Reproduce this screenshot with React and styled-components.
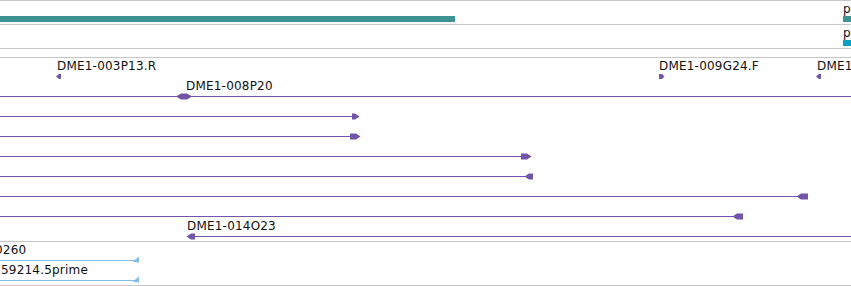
import React from "react";
import styled, { createGlobalStyle } from "styled-components";

const Global = createGlobalStyle`
  html, body { margin: 0; padding: 0; background: #fff; overflow: hidden; }
  body { font-family: "DejaVu Sans", "Liberation Sans", sans-serif; }
`;

const GRID = "#c6c6c6";
const PURPLE = "#7254a9";
const TEAL = "#409292";
const CYAN = "#0aa2c2";
const SKY = "#82bde6";

const Browser = styled.div`
  width: 851px;
  height: 286px;
  display: flex;
  flex-direction: column;
  border-top: 1px solid ${GRID};
  box-sizing: border-box;
  overflow: hidden;
`;

const Track = styled.div`
  position: relative;
  flex: none;
  box-sizing: border-box;
  height: ${(p) => p.$h}px;
  border-bottom: 1px solid ${GRID};
  overflow: hidden;
  display: flex;
  flex-direction: column;
`;

const Row = styled.div`
  position: relative;
  flex: none;
  height: ${(p) => p.$h || 20}px;
`;

const Label = styled.span`
  position: absolute;
  top: 1px;
  font-size: 12px;
  line-height: 14px;
  color: #111;
  white-space: nowrap;
  letter-spacing: 0.2px;
`;

const Bar = styled.div`
  position: absolute;
  top: 15px;
  height: 6px;
  background: ${(p) => p.$color};
`;

const Lane = styled.svg`
  position: absolute;
  left: 0;
  top: 14px;
  display: block;
`;

const T = 1.5;
const B = 7.5;
const right = (x0, xb, xt, t = T, b = B) =>
  `${x0},${t} ${xb},${t} ${xt},4.5 ${xb},${b} ${x0},${b}`;
const left = (xt, xb, x1, t = T, b = B) =>
  `${xt},4.5 ${xb},${t} ${x1},${t} ${x1},${b} ${xb},${b}`;

const rows = [
  {
    labels: [
      { x: 57, t: "DME1-003P13.R" },
      { x: 659, t: "DME1-009G24.F" },
      { x: 817, t: "DME1" },
    ],
    lines: [],
    shapes: [left(56, 59, 61, 2, 7), right(659, 662, 664.5, 2, 7), left(816, 819, 821, 2, 7)],
  },
  {
    labels: [{ x: 186, t: "DME1-008P20" }],
    lines: [[0, 851]],
    shapes: [`176,4.5 181,1.5 187,1.5 192,4.5 187,7.5 181,7.5`],
  },
  { labels: [], lines: [[0, 353]], shapes: [right(352, 355, 359.5)] },
  { labels: [], lines: [[0, 351]], shapes: [right(350, 356, 360.5)] },
  { labels: [], lines: [[0, 522]], shapes: [right(521, 527, 531.5)] },
  { labels: [], lines: [[0, 529]], shapes: [left(524.5, 529, 533)] },
  { labels: [], lines: [[0, 801]], shapes: [left(796.5, 801, 808)] },
  { labels: [], lines: [[0, 737]], shapes: [left(732.5, 737, 743)] },
  {
    labels: [{ x: 187, t: "DME1-014O23" }],
    lines: [[190, 851]],
    shapes: [left(186.5, 191, 195)],
  },
];

const estRows = [
  { label: { x: -5, t: "0260" } },
  { label: { x: 1, t: "59214.5prime" } },
];

function FeatureRow({ row }) {
  return (
    <Row>
      {row.labels.map((l) => (
        <Label key={l.t + l.x} style={{ left: l.x }}>
          {l.t}
        </Label>
      ))}
      <Lane width="851" height="9" viewBox="0 0 851 9">
        {row.lines.map(([a, b]) => (
          <rect key={a} x={a} y="4" width={b - a} height="1" fill={PURPLE} />
        ))}
        {row.shapes.map((s) => (
          <polygon key={s} points={s} fill={PURPLE} />
        ))}
      </Lane>
    </Row>
  );
}

function EstRow({ row }) {
  return (
    <Row>
      <Label style={{ left: row.label.x }}>{row.label.t}</Label>
      <Lane width="851" height="9" viewBox="0 0 851 9">
        <rect x="0" y="4" width="136" height="1" fill={SKY} />
        <polygon points="133.5,5 139,0.5 139,6.5 133.5,6" fill={SKY} />
      </Lane>
    </Row>
  );
}

export default function App() {
  return (
    <>
      <Global />
      <Browser>
        <Track $h={24}>
          <Row $h={23}>
            <Bar $color={TEAL} style={{ left: 0, width: 455 }} />
            <Label style={{ left: 843 }}>p</Label>
            <Bar $color={TEAL} style={{ left: 843, width: 8 }} />
          </Row>
        </Track>
        <Track $h={24}>
          <Row $h={23}>
            <Label style={{ left: 843 }}>p</Label>
            <Bar $color={CYAN} style={{ left: 843, width: 8 }} />
          </Row>
        </Track>
        <Track $h={9} />
        <Track $h={184}>
          {rows.map((r, i) => (
            <FeatureRow key={i} row={r} />
          ))}
        </Track>
        <Track $h={44}>
          {estRows.map((r, i) => (
            <EstRow key={i} row={r} />
          ))}
        </Track>
      </Browser>
    </>
  );
}
